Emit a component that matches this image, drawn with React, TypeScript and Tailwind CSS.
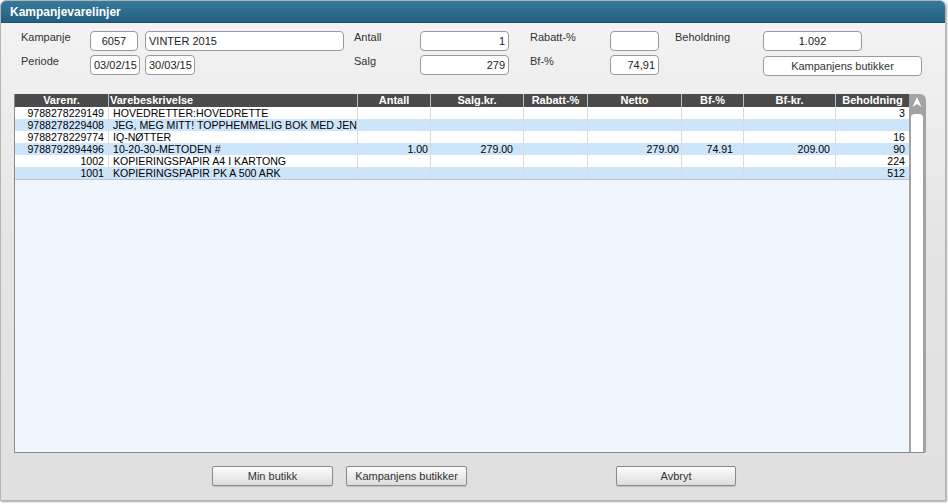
import React from "react";

type Row = {
  nr: string;
  desc: string;
  antall?: string;
  salg?: string;
  rabatt?: string;
  netto?: string;
  bfp?: string;
  bfkr?: string;
  beh?: string;
};

const rows: Row[] = [
  { nr: "9788278229149", desc: "HOVEDRETTER:HOVEDRETTE", beh: "3" },
  { nr: "9788278229408", desc: "JEG, MEG MITT! TOPPHEMMELIG BOK MED JEN" },
  { nr: "9788278229774", desc: "IQ-NØTTER", beh: "16" },
  {
    nr: "9788792894496",
    desc: "10-20-30-METODEN #",
    antall: "1.00",
    salg: "279.00",
    netto: "279.00",
    bfp: "74.91",
    bfkr: "209.00",
    beh: "90",
  },
  { nr: "1002", desc: "KOPIERINGSPAPIR A4 I KARTONG", beh: "224" },
  { nr: "1001", desc: "KOPIERINGSPAPIR PK A 500 ARK", beh: "512" },
];

const cols = [
  { key: "nr", label: "Varenr.", w: "w-[94px]", head: "text-center", cell: "text-right pr-[4px]" },
  { key: "desc", label: "Varebeskrivelse", w: "w-[249px]", head: "text-left pl-[1px]", cell: "text-left pl-[4px]" },
  { key: "antall", label: "Antall", w: "w-[73px]", head: "text-center", cell: "text-right pr-[2px]" },
  { key: "salg", label: "Salg.kr.", w: "w-[93px]", head: "text-center", cell: "text-right pr-[10px]" },
  { key: "rabatt", label: "Rabatt-%", w: "w-[64px]", head: "text-center", cell: "text-right pr-[4px]" },
  { key: "netto", label: "Netto", w: "w-[94px]", head: "text-center", cell: "text-right pr-[2px]" },
  { key: "bfp", label: "Bf-%", w: "w-[62px]", head: "text-center", cell: "text-right pr-[10px]" },
  { key: "bfkr", label: "Bf-kr.", w: "w-[92px]", head: "text-center", cell: "text-right pr-[5px]" },
  { key: "beh", label: "Beholdning", w: "w-[73px]", head: "text-center", cell: "text-right pr-[4px]" },
] as const;

function Field({ w, value, align = "text-center" }: { w: string; value?: string; align?: string }) {
  return (
    <div
      className={`${w} h-[20px] shrink-0 bg-white border border-[#9a9a9a] rounded-[4px] px-[3px] text-[11px] leading-[18px] text-[#222] ${align} overflow-hidden whitespace-nowrap`}
    >
      {value}
    </div>
  );
}

function Label({ w, children }: { w: string; children: React.ReactNode }) {
  return <div className={`${w} shrink-0 text-[11px] leading-[13px] text-[#333]`}>{children}</div>;
}

function Btn({ w, children }: { w: string; children: React.ReactNode }) {
  return (
    <button
      className={`${w} h-[20px] shrink-0 border border-[#8a8a8a] rounded-[2px] bg-gradient-to-b from-[#fdfdfd] to-[#dcdcdc] text-[11px] text-[#333] shadow-[0_1px_1px_rgba(0,0,0,0.15)]`}
    >
      {children}
    </button>
  );
}

export default function App() {
  return (
    <div className="w-[948px] h-[504px] bg-white font-['Liberation_Sans',Arial,sans-serif]">
      <div className="w-[946px] h-[501px] flex flex-col border border-[#b4b4b4] rounded-t-[6px] overflow-hidden shadow-[1px_1px_2px_rgba(0,0,0,0.35)] bg-gradient-to-b from-[#f4f4f4] via-[#e4e4e4] to-[#e0e0e0]">
        {/* Title bar */}
        <div className="h-[22px] shrink-0 bg-gradient-to-b from-[#377a9b] to-[#226080] border-b border-[#1c4f6a] px-[9px] flex items-center">
          <span className="text-white font-bold text-[12px] leading-none">Kampanjevarelinjer</span>
        </div>

        {/* Form */}
        <div className="pl-[20px] pt-[8px] flex flex-col gap-[4px]">
          <div className="flex items-start">
            <Label w="w-[69px]">Kampanje</Label>
            <Field w="w-[48px]" value="6057" />
            <div className="w-[7px] shrink-0" />
            <Field w="w-[199px]" value="VINTER 2015" align="text-left" />
            <div className="w-[10px] shrink-0" />
            <Label w="w-[66px]">Antall</Label>
            <Field w="w-[89px]" value="1" align="text-right" />
            <div className="w-[21px] shrink-0" />
            <Label w="w-[80px]">Rabatt-%</Label>
            <Field w="w-[49px]" value="" />
            <div className="w-[16px] shrink-0" />
            <Label w="w-[88px]">Beholdning</Label>
            <Field w="w-[99px]" value="1.092" />
          </div>
          <div className="flex items-start">
            <Label w="w-[69px]">Periode</Label>
            <Field w="w-[50px]" value="03/02/15" />
            <div className="w-[5px] shrink-0" />
            <Field w="w-[50px]" value="30/03/15" />
            <div className="w-[159px] shrink-0" />
            <Label w="w-[66px]">Salg</Label>
            <Field w="w-[89px]" value="279" align="text-right" />
            <div className="w-[21px] shrink-0" />
            <Label w="w-[80px]">Bf-%</Label>
            <Field w="w-[49px]" value="74,91" align="text-right" />
            <div className="w-[104px] shrink-0" />
            <div className="mt-[1px] w-[159px] h-[20px] shrink-0 bg-white border border-[#9a9a9a] rounded-[4px] text-[11px] leading-[18px] text-[#333] text-center">
              Kampanjens butikker
            </div>
          </div>
        </div>

        {/* Grid */}
        <div className="ml-[13px] mt-[18px] w-[911px] h-[359px] flex border-l border-b border-[#8c8c8c]">
          <div className="w-[894px] flex flex-col bg-[#eff6fe]">
            <div className="flex h-[13px] bg-[#4a4a4a] shrink-0">
              {cols.map((c, i) => (
                <div
                  key={c.key}
                  className={`${c.w} ${c.head} shrink-0 text-white font-bold text-[11px] leading-[13px] ${i < cols.length - 1 ? "border-r border-[#bdbdbd]" : ""} overflow-hidden whitespace-nowrap`}
                >
                  {c.label}
                </div>
              ))}
            </div>
            {rows.map((r, ri) => (
              <div key={ri} className={`flex h-[12px] shrink-0 ${ri % 2 === 1 ? "bg-[#cde5fb]" : "bg-white"}`}>
                {cols.map((c, i) => (
                  <div
                    key={c.key}
                    className={`${c.w} ${c.cell} shrink-0 text-[10.6px] leading-[12px] text-black ${i < cols.length - 1 ? "border-r border-[#dcdcdc]" : ""} overflow-hidden whitespace-nowrap`}
                  >
                    {(r as Record<string, string | undefined>)[c.key] ?? ""}
                  </div>
                ))}
              </div>
            ))}
            <div className="h-[1px] bg-[#c4c4c4] shrink-0" />
          </div>
          {/* Scrollbar */}
          <div className="w-[17px] bg-[#a3a3a3] rounded-tr-[6px] flex flex-col items-start pl-[2px] pr-[3px]">
            <svg width="12" height="20" viewBox="0 0 12 20" className="shrink-0">
              <path d="M6 3 L10.5 13 L6 10 L1.5 13 Z" fill="#ffffff" />
            </svg>
            <div className="w-[12px] flex-1 bg-white rounded-t-[4px]" />
          </div>
        </div>

        {/* Buttons */}
        <div className="flex pl-[211px] mt-[13px]">
          <Btn w="w-[121px]">Min butikk</Btn>
          <div className="w-[13px] shrink-0" />
          <Btn w="w-[121px]">Kampanjens butikker</Btn>
          <div className="w-[149px] shrink-0" />
          <Btn w="w-[120px]">Avbryt</Btn>
        </div>
      </div>
    </div>
  );
}
